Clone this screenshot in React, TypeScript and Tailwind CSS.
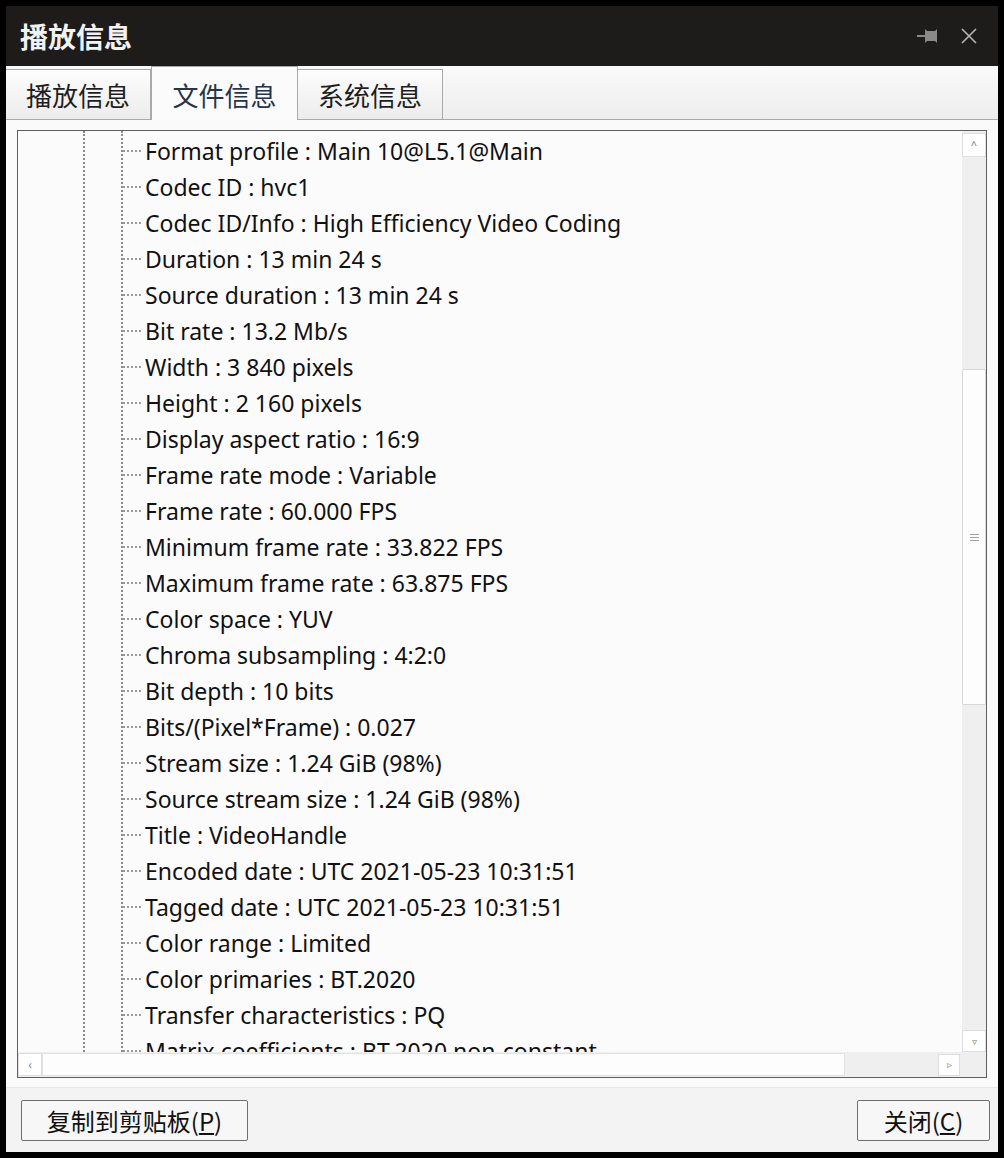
import React from "react";

const rows = [
  "Format profile : Main 10@L5.1@Main",
  "Codec ID : hvc1",
  "Codec ID/Info : High Efficiency Video Coding",
  "Duration : 13 min 24 s",
  "Source duration : 13 min 24 s",
  "Bit rate : 13.2 Mb/s",
  "Width : 3 840 pixels",
  "Height : 2 160 pixels",
  "Display aspect ratio : 16:9",
  "Frame rate mode : Variable",
  "Frame rate : 60.000 FPS",
  "Minimum frame rate : 33.822 FPS",
  "Maximum frame rate : 63.875 FPS",
  "Color space : YUV",
  "Chroma subsampling : 4:2:0",
  "Bit depth : 10 bits",
  "Bits/(Pixel*Frame) : 0.027",
  "Stream size : 1.24 GiB (98%)",
  "Source stream size : 1.24 GiB (98%)",
  "Title : VideoHandle",
  "Encoded date : UTC 2021-05-23 10:31:51",
  "Tagged date : UTC 2021-05-23 10:31:51",
  "Color range : Limited",
  "Color primaries : BT.2020",
  "Transfer characteristics : PQ",
  "Matrix coefficients : BT.2020 non-constant",
];

const cjk = "font-['Noto_Sans_CJK_SC','Noto_Sans',sans-serif]";

function PinIcon() {
  return (
    <svg width="24" height="18" viewBox="0 0 24 18" fill="none">
      <line x1="1" y1="9" x2="9" y2="9" stroke="#8a8a8a" strokeWidth="2" />
      <path d="M9 2 L11 4 L19 4 L21 2 L21 16 L19 14 L11 14 L9 16 Z" fill="#8a8a8a" />
    </svg>
  );
}

function CloseIcon() {
  return (
    <svg width="18" height="18" viewBox="0 0 18 18">
      <path d="M2 2 L16 16 M16 2 L2 16" stroke="#b5b5b5" strokeWidth="1.6" />
    </svg>
  );
}

function Tab({ label, active }: { label: string; active?: boolean }) {
  if (active) {
    return (
      <div className="flex h-[54px] w-[147px] items-center justify-center border-x border-t border-[#a9a9a9] bg-[#fbfbfb] pt-[2px]">
        <span className={`${cjk} text-[26px] text-[#25364a]`}>{label}</span>
      </div>
    );
  }
  return (
    <div className="mt-[2px] flex h-[51px] w-[145px] items-center justify-center border-r border-t border-b border-[#a9a9a9] bg-gradient-to-b from-[#fdfdfd] to-[#ececec]">
      <span className={`${cjk} text-[26px] text-[#1e1e1e]`}>{label}</span>
    </div>
  );
}

export default function App() {
  return (
    <div className="h-[1158px] w-[1004px] bg-black p-[6px]">
      <div className="flex h-full flex-col bg-[#fafafa]">
        {/* Title bar */}
        <div className="flex h-[60px] items-center bg-[#1e1b1b] pl-[14px] pr-[20px]">
          <span className={`${cjk} flex-1 text-[28px] font-bold text-[#f2f2f2]`}>播放信息</span>
          <div className="flex items-center gap-[20px]">
            <PinIcon />
            <CloseIcon />
          </div>
        </div>

        {/* Tabs */}
        <div className="flex h-[54px] items-end bg-gradient-to-b from-[#fafafa] to-[#ededed]">
          <Tab label="播放信息" />
          <Tab label="文件信息" active />
          <Tab label="系统信息" />
          <div className="h-[1px] flex-1 bg-[#a9a9a9]" />
        </div>

        {/* Tree frame */}
        <div className="mx-[11px] mt-[10px] flex h-[948px] flex-col border border-[#5f5f5f] bg-[#fbfbfb]">
          <div className="flex min-h-0 flex-1">
            <div className="min-w-0 flex-1 overflow-hidden pl-[65px]">
              <div className="h-full border-l-2 border-dotted border-[#8a8a8a] pl-[36px]">
                <div className="h-full border-l-2 border-dotted border-[#8a8a8a] pt-[2px]">
                  {rows.map((r) => (
                    <div key={r} className="flex h-[36px] items-center">
                      <span className="mr-[4px] w-[18px] border-t-2 border-dotted border-[#9a9a9a]" />
                      <span className="whitespace-nowrap font-['Noto_Sans',sans-serif] text-[23px] leading-[36px] text-[#111]">
                        {r}
                      </span>
                    </div>
                  ))}
                </div>
              </div>
            </div>
            {/* Vertical scrollbar */}
            <div className="flex w-[24px] flex-col bg-[#efefef] pt-[2px]">
              <div className="flex h-[24px] items-center justify-center border border-[#dedede] bg-white text-[11px] text-[#777]">
                ^
              </div>
              <div className="h-[212px]" />
              <div className="flex h-[336px] items-center justify-center rounded-[1px] border border-[#d8d8d8] bg-[#fdfdfd]">
                <div className="flex flex-col gap-[2px]">
                  <div className="h-[1px] w-[9px] bg-[#a0a0a0]" />
                  <div className="h-[1px] w-[9px] bg-[#a0a0a0]" />
                  <div className="h-[1px] w-[9px] bg-[#a0a0a0]" />
                </div>
              </div>
              <div className="flex-1" />
              <div className="flex h-[22px] items-center justify-center border border-[#dedede] bg-white text-[10px] text-[#888]">
                ▿
              </div>
            </div>
          </div>
          {/* Horizontal scrollbar */}
          <div className="flex h-[25px] items-center bg-[#efefef]">
            <div className="flex h-[23px] w-[24px] items-center justify-center border border-[#dedede] bg-white text-[12px] text-[#888]">
              ‹
            </div>
            <div className="h-[23px] w-[803px] border border-[#e2e2e2] bg-[#fdfdfd]" />
            <div className="flex-1" />
            <div className="mr-[26px] flex h-[22px] w-[22px] items-center justify-center border border-[#dedede] bg-white text-[10px] text-[#888]">
              ▹
            </div>
          </div>
        </div>

        {/* Bottom buttons */}
        <div className="mt-[9px] flex flex-1 items-start justify-between border-t border-[#e6e6e6] bg-[#f3f3f3] pl-[15px] pr-[8px] pt-[12px]">
          <button
            type="button"
            className={`${cjk} flex h-[41px] w-[227px] items-center justify-center rounded-[2px] border border-[#6f6f6f] bg-[#f7f7f7] text-[24px] text-[#111]`}
          >
            复制到剪贴板(<span className="underline">P</span>)
          </button>
          <button
            type="button"
            className={`${cjk} flex h-[41px] w-[133px] items-center justify-center rounded-[2px] border border-[#6f6f6f] bg-[#f7f7f7] text-[24px] text-[#111]`}
          >
            关闭(<span className="underline">C</span>)
          </button>
        </div>
      </div>
    </div>
  );
}
